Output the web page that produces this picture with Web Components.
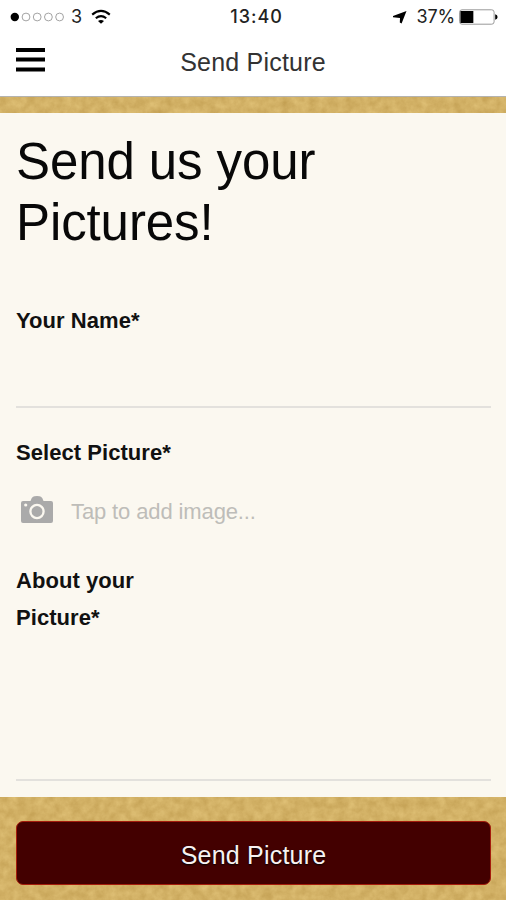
<!DOCTYPE html>
<html lang="en">
<head>
<meta charset="utf-8">
<meta name="viewport" content="width=device-width, initial-scale=1">
<title>Send Picture</title>
<style>
  html, body { margin: 0; height: 100%; }
  body { font-family: "Liberation Sans", Arial, sans-serif; color: #111; overflow: hidden; }
</style>
</head>
<body>
<picture-app>
  <status-bar slot="top" time="13:40" carrier="3" battery="37"></status-bar>
  <nav-bar slot="top">Send Picture</nav-bar>
  <form-heading>Send us your Pictures!</form-heading>
  <form-field class="name" label="Your Name*"></form-field>
  <form-field class="photo" label="Select Picture*" plain>
    <image-picker>Tap to add image...</image-picker>
  </form-field>
  <form-field class="about" label="About your Picture*"></form-field>
  <submit-button slot="footer">Send Picture</submit-button>
</picture-app>

<script>
class BaseElement extends HTMLElement {
  connectedCallback() {
    if (this.shadowRoot) return;
    this.attachShadow({ mode: "open" });
    this.shadowRoot.innerHTML = `
      <style>:host, *, *::before, *::after { box-sizing: border-box; }</style>
      ${this.render()}
    `;
  }
}

// fractal noise tinted as sand coloured paper
const paper = `
  <svg xmlns="http://www.w3.org/2000/svg" width="506" height="900">
    <filter id="n" x="0" y="0" width="100%" height="100%" color-interpolation-filters="sRGB">
      <feTurbulence type="fractalNoise" baseFrequency="0.11" numOctaves="4" seed="8"/>
      <feColorMatrix values="0.13 0 0 0 0.76  0.15 0 0 0 0.62  0.16 0 0 0 0.32  0 0 0 0 1"/>
    </filter>
    <rect width="506" height="900" filter="url(#n)"/>
  </svg>`;

class PictureApp extends BaseElement {
  render() {
    return `
      <style>
        :host {
          display: grid;
          grid-template-rows: auto 684px 1fr;
          height: 900px;
          background: #d2b062 url("data:image/svg+xml,${encodeURIComponent(paper).replace(/[()']/g, (c) => "%" + c.charCodeAt(0).toString(16))}");
        }
        header { margin-bottom: 16px; }
        main {
          display: flex;
          flex-direction: column;
          padding: 18px 15px 0 16px;
          background: #fbf8f0;
        }
        footer { padding: 24px 15px 15px 16px; }
        ::slotted(.name) { height: 106px; margin-top: 49px; }
        ::slotted(.photo) { height: 97px; margin-top: 26px; }
        ::slotted(.about) { height: 219px; margin-top: 31px; }
      </style>
      <header><slot name="top"></slot></header>
      <main><slot></slot></main>
      <footer><slot name="footer"></slot></footer>
    `;
  }
}

class StatusBar extends BaseElement {
  render() {
    const battery = Number(this.getAttribute("battery"));
    const dots = [0, 1, 2, 3, 4]
      .map((i) => `<circle cx="${4.8 + i * 11.2}" cy="5" r="${i ? 3.9 : 4.2}" class="${i ? "" : "on"}"/>`)
      .join("");

    return `
      <style>
        :host {
          display: grid;
          grid-template-columns: 1fr auto 1fr;
          align-items: center;
          height: 33px;
          padding: 0 8px 0 10px;
          background: #fff;
          font: 400 18px/33px Inter, sans-serif;
          color: #222;
        }
        div { display: flex; align-items: center; }
        .right { justify-content: flex-end; }
        .time { font-weight: 500; letter-spacing: 1px; margin-left: 5px; }
        .carrier { margin: 0 9px 0 7px; }
        .charge { letter-spacing: -0.2px; margin: 0 4px 0 10px; }
        circle { fill: none; stroke: #999; stroke-width: 0.9; }
        circle.on { fill: #000; stroke: none; }
        svg { display: block; }
      </style>
      <div>
        <svg width="54" height="10">${dots}</svg>
        <span class="carrier">${this.getAttribute("carrier")}</span>
        <svg width="20" height="16" viewBox="0 0 20 16" fill="none" stroke="#000" stroke-width="2.1">
          <path d="M1.2 5.6Q10 -1.9 18.8 5.6M4.8 9.3Q10 4.9 15.2 9.3"/>
          <path d="M7 12Q10 9.8 13 12L10 14.8Z" fill="#000" stroke="none"/>
        </svg>
      </div>
      <span class="time">${this.getAttribute("time")}</span>
      <div class="right">
        <svg width="14" height="14" viewBox="0 0 14 14"><path d="M13.5 1L8.6 13.5L6.8 12.5L7 8L0 7.2V6Z"/></svg>
        <span class="charge">${battery}%</span>
        <svg width="39" height="16" viewBox="0 0 39 16">
          <rect x=".6" y=".8" width="34.5" height="14.4" rx="2.4" fill="#fff" stroke="#999"/>
          <rect x="1.4" y="1.9" width="${battery * 0.35}" height="12" rx=".5"/>
          <path d="M36.2 5.2Q38.6 6 38.6 8T36.2 10.8Z"/>
        </svg>
      </div>
    `;
  }
}

class NavBar extends BaseElement {
  render() {
    return `
      <style>
        :host {
          display: grid;
          grid-template-columns: 60px 1fr 60px;
          align-items: center;
          height: 64px;
          padding-bottom: 5px;
          background: #fff;
          border-bottom: 1.5px solid #b4b3b0;
          font-size: 25px;
          letter-spacing: 0.2px;
          color: #333;
        }
        svg { display: block; margin: -4px 0 0 16px; }
        span { text-align: center; }
      </style>
      <svg width="29" height="24" viewBox="0 0 29 24">
        <path d="M0 0h29v4H0zM0 9.5h29v4H0zM0 19.5h29v4H0z"/>
      </svg>
      <span><slot></slot></span>
    `;
  }
}

class FormHeading extends BaseElement {
  render() {
    return `
      <style>
        :host { display: block; }
        h1 {
          width: 340px;
          margin: 0;
          font-size: 51px;
          font-weight: 400;
          line-height: 61px;
          letter-spacing: -0.1px;
          color: #080808;
        }
      </style>
      <h1><slot></slot></h1>
    `;
  }
}

class FormField extends BaseElement {
  render() {
    return `
      <style>
        :host {
          display: flex;
          flex-direction: column;
          flex: none;
          border-bottom: 2px solid #e3e1dd;
        }
        :host([plain]) { border-bottom: 0; }
        label {
          width: 160px;
          font-size: 22px;
          font-weight: 700;
          line-height: 37px;
          letter-spacing: 0.05px;
        }
      </style>
      <label>${this.getAttribute("label")}</label>
      <slot></slot>
    `;
  }
}

class ImagePicker extends BaseElement {
  render() {
    return `
      <style>
        :host {
          display: flex;
          align-items: center;
          flex: none;
          gap: 18px;
          height: 38px;
          margin-top: 22px;
          padding-left: 5px;
          font-size: 22px;
          letter-spacing: -0.12px;
          color: #bebdb9;
        }
        svg { flex: none; margin-top: -5px; }
      </style>
      <svg width="32" height="27" viewBox="0 0 32 27">
        <path fill="#aaa" d="M2 5H9.5Q10.5 1.6 12 .7Q13 0 16 0Q19 0 20 .7Q21.5 1.6 22.5 5H30Q32 5 32 7V25Q32 27 30 27H2Q0 27 0 25V7Q0 5 2 5Z"/>
        <circle cx="16" cy="15.5" r="6.6" fill="none" stroke="#fbf8f0" stroke-width="2.3"/>
        <circle cx="4.7" cy="9" r="1.6" fill="#fbf8f0"/>
      </svg>
      <slot></slot>
    `;
  }
}

class SubmitButton extends BaseElement {
  render() {
    return `
      <style>
        :host { display: block; }
        button {
          display: block;
          width: 100%;
          height: 64px;
          padding: 4px 0 0;
          border: 1.5px solid #a51c0c;
          border-radius: 7px;
          background: #430000;
          color: #f7f2f2;
          font: inherit;
          font-size: 25px;
          letter-spacing: 0.2px;
          text-shadow: 0 1px 2px #000;
        }
      </style>
      <button type="button"><slot></slot></button>
    `;
  }
}

customElements.define("picture-app", PictureApp);
customElements.define("status-bar", StatusBar);
customElements.define("nav-bar", NavBar);
customElements.define("form-heading", FormHeading);
customElements.define("form-field", FormField);
customElements.define("image-picker", ImagePicker);
customElements.define("submit-button", SubmitButton);
</script>
</body>
</html>
